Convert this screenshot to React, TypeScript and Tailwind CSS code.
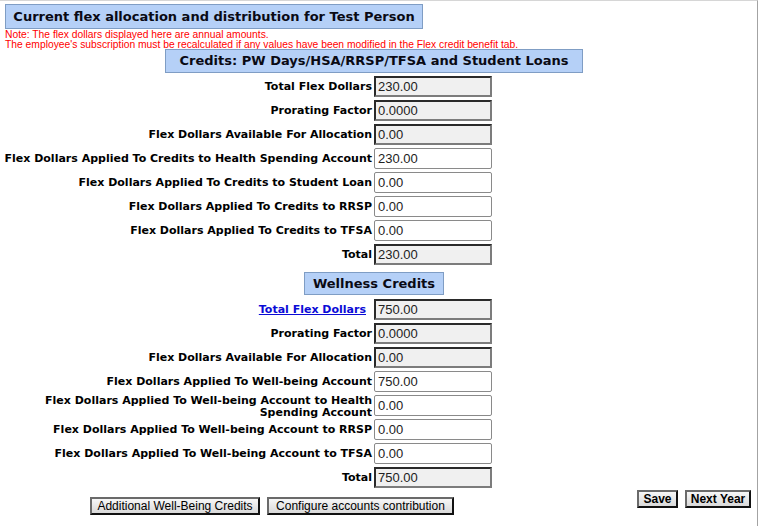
import React from 'react'

type Row = {
  label: string
  value: string
  readOnly?: boolean
  link?: boolean
  wrap?: boolean
}

const credits: Row[] = [
  { label: 'Total Flex Dollars', value: '230.00', readOnly: true },
  { label: 'Prorating Factor', value: '0.0000', readOnly: true },
  { label: 'Flex Dollars Available For Allocation', value: '0.00', readOnly: true },
  { label: 'Flex Dollars Applied To Credits to Health Spending Account', value: '230.00' },
  { label: 'Flex Dollars Applied To Credits to Student Loan', value: '0.00' },
  { label: 'Flex Dollars Applied To Credits to RRSP', value: '0.00' },
  { label: 'Flex Dollars Applied To Credits to TFSA', value: '0.00' },
  { label: 'Total', value: '230.00', readOnly: true },
]

const wellness: Row[] = [
  { label: 'Total Flex Dollars', value: '750.00', readOnly: true, link: true },
  { label: 'Prorating Factor', value: '0.0000', readOnly: true },
  { label: 'Flex Dollars Available For Allocation', value: '0.00', readOnly: true },
  { label: 'Flex Dollars Applied To Well-being Account', value: '750.00' },
  { label: 'Flex Dollars Applied To Well-being Account to Health Spending Account', value: '0.00', wrap: true },
  { label: 'Flex Dollars Applied To Well-being Account to RRSP', value: '0.00' },
  { label: 'Flex Dollars Applied To Well-being Account to TFSA', value: '0.00' },
  { label: 'Total', value: '750.00', readOnly: true },
]

const btn =
  'flex h-[18px] items-center justify-center border-2 border-t-[#6a6a6a] border-l-[#6a6a6a] border-r-[#111] border-b-[#111] bg-gradient-to-b from-[#f7f7f7] to-[#d9d9d9]'

const FieldRow = ({ label, value, readOnly, link, wrap }: Row) => (
  <div className="flex h-[21px] items-center gap-[2px]">
    {wrap ? (
      <div className="flex h-[24px] w-[367px] items-start justify-end overflow-hidden pt-[1px]">
        <span className="text-right text-[11px] font-bold leading-[12.5px] text-black">{label}</span>
      </div>
    ) : (
      <div className="flex w-[367px] items-center justify-end whitespace-nowrap">
        {link ? (
          <a href="#" className="pr-[6px] text-[11px] font-bold leading-[13px] text-[#0b0bd6] underline">
            {label}
          </a>
        ) : (
          <span className="text-[11px] font-bold leading-[13px] text-black">{label}</span>
        )}
      </div>
    )}
    <div
      className={
        readOnly
          ? 'flex h-[21px] w-[118px] items-center border-2 border-t-[#2a2a2a] border-l-[#2a2a2a] border-r-[#7c7c7c] border-b-[#7c7c7c] bg-[#f0f0f0] pl-[2px] font-["Liberation_Sans",sans-serif] text-[13px] text-[#222]'
          : 'flex h-[21px] w-[118px] items-center rounded-[2px] border border-[#8a8a8a] bg-white pl-[3px] font-["Liberation_Sans",sans-serif] text-[13px] text-[#222]'
      }
    >
      {value}
    </div>
  </div>
)

const SectionHeader = ({ children, className }: { children: React.ReactNode; className: string }) => (
  <div className="flex w-[748px] justify-center">
    <div
      className={`flex items-center justify-center border border-[#7f9dc4] bg-[#b5d0f7] text-[13px] font-bold text-[#0a0a14] ${className}`}
    >
      {children}
    </div>
  </div>
)

const App = () => {
  return (
    <div className='h-[526px] w-[758px] border-t border-r border-t-[#d6d6d6] border-r-[#a3a3a3] bg-white font-["DejaVu_Sans",Verdana,sans-serif]'>
      <div className="ml-[5px] mt-[3px] flex h-[25px] w-[418px] items-center justify-center border border-[#7f9dc4] bg-[#b5d0f7] text-[13px] font-bold text-[#0a0a14]">
        Current flex allocation and distribution for Test Person
      </div>
      <div className='pl-[5px] pt-[1px] font-["Liberation_Sans",Arial,sans-serif] text-[10.3px] leading-[10px] text-[#f00]'>
        <div>Note: The flex dollars displayed here are annual amounts.</div>
        <div>The employee's subscription must be recalculated if any values have been modified in the Flex credit benefit tab.</div>
      </div>

      <div className="-mt-[1px]">
        <SectionHeader className="h-[24px] w-[418px]">Credits: PW Days/HSA/RRSP/TFSA and Student Loans</SectionHeader>
      </div>
      <div className="mt-[3px] flex flex-col gap-[3px] pl-[5px]">
        {credits.map((r) => (
          <FieldRow key={r.label} {...r} />
        ))}
      </div>

      <div className="mt-[7px]">
        <SectionHeader className="h-[23px] w-[140px]">Wellness Credits</SectionHeader>
      </div>
      <div className="mt-[4px] flex flex-col gap-[3px] pl-[5px]">
        {wellness.map((r) => (
          <FieldRow key={r.label} {...r} />
        ))}
      </div>

      <div className='mt-[3px] flex items-start font-["Liberation_Sans",Arial,sans-serif] text-[12px] text-black'>
        <div className="ml-[90px] mt-[6px] flex gap-[7px]">
          <button className={`${btn} w-[170px]`}>Additional Well-Being Credits</button>
          <button className={`${btn} w-[187px]`}>Configure accounts contribution</button>
        </div>
        <div className="ml-auto mr-[6px] -mt-[1px] flex gap-[7px] font-bold">
          <button className={`${btn} w-[41px]`}>Save</button>
          <button className={`${btn} w-[66px]`}>Next Year</button>
        </div>
      </div>
    </div>
  )
}

export default App
